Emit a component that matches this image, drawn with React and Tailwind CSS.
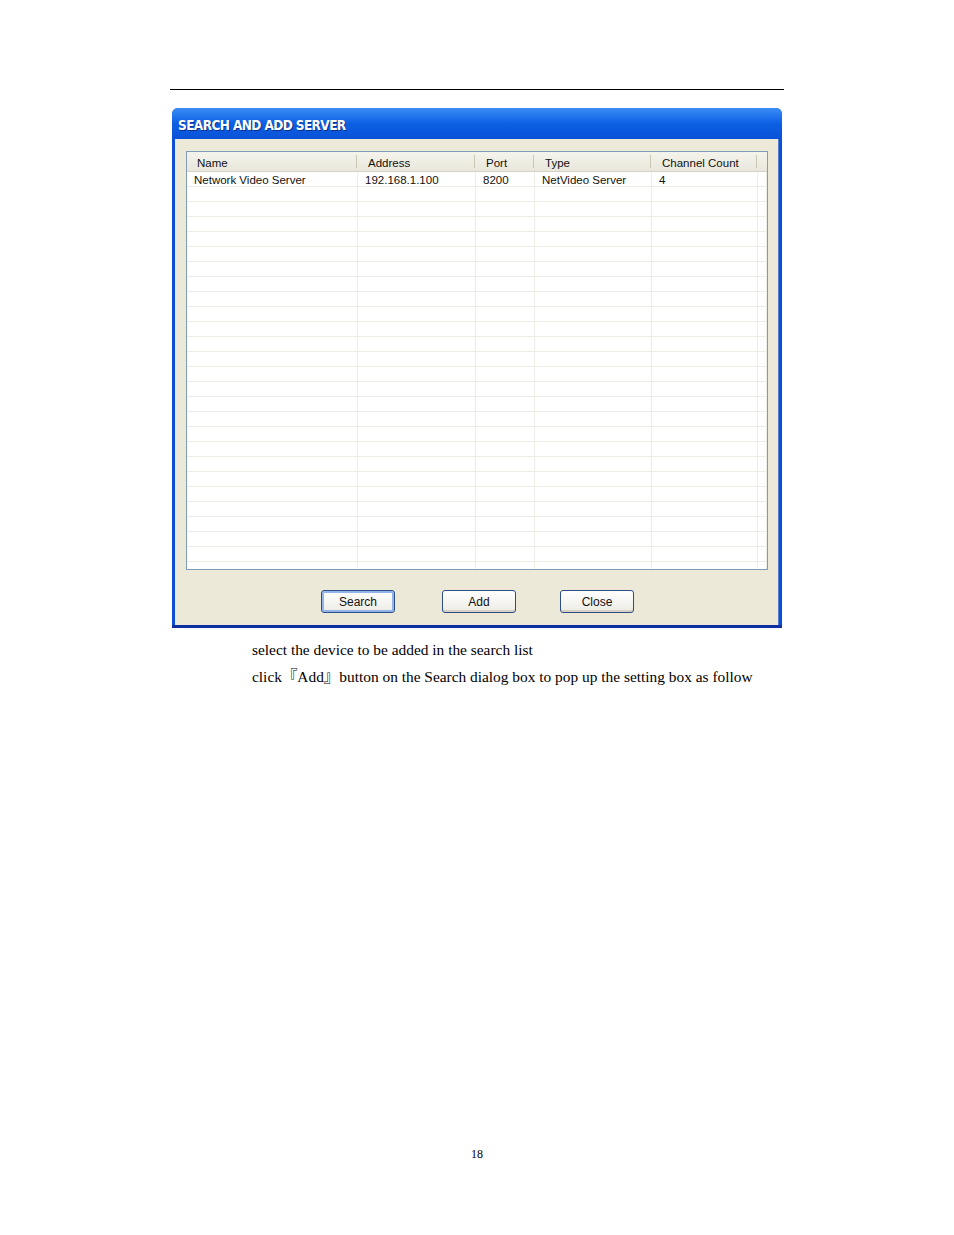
import React from 'react'

const COLS = [
  { label: 'Name', w: 'w-[171px]' },
  { label: 'Address', w: 'w-[118px]' },
  { label: 'Port', w: 'w-[59px]' },
  { label: 'Type', w: 'w-[117px]' },
  { label: 'Channel Count', w: 'w-[106px]' },
]

const ROWS = [['Network Video Server', '192.168.1.100', '8200', 'NetVideo Server', '4']]
const EMPTY_ROWS = 25

function Row({ cells, last }) {
  return (
    <div className={`flex h-[15px] ${last ? '' : 'border-b border-[#eeede5]'}`}>
      {COLS.map((c, i) => (
        <div
          key={i}
          className={`${c.w} shrink-0 border-r border-[#eeede5] pl-[7px] pt-[1px] leading-[14px] whitespace-nowrap overflow-hidden`}
        >
          {cells ? cells[i] : ''}
        </div>
      ))}
      <div className="flex-1 border-r border-[#eeede5]" />
    </div>
  )
}

function XpButton({ children, isDefault, className = '' }) {
  return (
    <button
      className={`w-[74px] h-[23px] rounded-[3px] border border-[#2b4f84] bg-gradient-to-b from-[#ffffff] to-[#ecebe4] text-[12px] text-[#111] leading-none ${
        isDefault ? 'shadow-[inset_0_0_0_2px_#93b4ea]' : 'shadow-[inset_0_-2px_0_#d6d0c5]'
      } ${className}`}
    >
      {children}
    </button>
  )
}

export default function App() {
  return (
    <div className="w-[954px] h-[1235px] bg-white relative font-['Liberation_Sans',Arial,sans-serif]">
      <div className="pt-[89px] pl-[170px]">
        <div className="w-[614px] border-t border-black" />

        <div className="ml-[2px] mt-[18px] w-[610px] h-[520px] flex flex-col bg-[#0a4fd6] rounded-t-[6px] overflow-hidden shadow-[inset_0_-3px_0_#0d2fa0]">
          {/* title bar */}
          <div className="h-[31px] shrink-0 flex items-center pt-[3px] px-[6px] bg-gradient-to-b from-[#3b8cf7] via-[#0d5fe3] to-[#0a52d8]">
            <span className="text-white font-bold text-[13.5px] tracking-[-0.6px] font-['DejaVu_Sans_Condensed','DejaVu_Sans',sans-serif] [text-shadow:1px_1px_0_#0b2f8c]">
              SEARCH AND ADD SERVER
            </span>
          </div>

          {/* body */}
          <div className="flex-1 mx-[3px] mb-[3px] bg-[#ece9d8] flex flex-col pt-[12px] pl-[11px] pr-[10px] border-r border-[#5a7fd0]">
            <div className="h-[419px] border border-[#7f9db9] bg-white flex flex-col text-[11.5px] text-[#111]">
              {/* header */}
              <div className="h-[20px] shrink-0 flex bg-gradient-to-b from-[#f5f4ec] to-[#e9e7dc] border-b border-[#d6d3c6]">
                {COLS.map((c, i) => (
                  <div key={i} className={`${c.w} shrink-0 flex items-center relative pl-[10px] pt-[4px] whitespace-nowrap`}>
                    {c.label}
                    <span className="absolute right-[1px] top-[3px] bottom-[3px] w-[1px] bg-[#c9c6b6]" />
                  </div>
                ))}
                <div className="flex-1" />
              </div>
              {ROWS.map((r, i) => (
                <Row key={i} cells={r} />
              ))}
              {Array.from({ length: EMPTY_ROWS }).map((_, i) => (
                <Row key={'e' + i} />
              ))}
              <div className="flex-1 flex">
                {COLS.map((c, i) => (
                  <div key={i} className={`${c.w} shrink-0 border-r border-[#eeede5]`} />
                ))}
                <div className="flex-1 border-r border-[#eeede5]" />
              </div>
            </div>

            <div className="mt-[20px] flex pl-[135px]">
              <XpButton isDefault>Search</XpButton>
              <XpButton className="ml-[47px]">Add</XpButton>
              <XpButton className="ml-[44px]">Close</XpButton>
            </div>
          </div>
        </div>

        <div className="pl-[82px] mt-[8px] font-['Liberation_Serif','Times_New_Roman',serif] text-[15.4px] text-black leading-[27px]">
          <p>select the device to be added in the search list</p>
          <p>
            click
            <span className="inline-block leading-[10px] font-['Noto_Sans_CJK_SC',serif]">『</span>
            Add
            <span className="inline-block leading-[10px] font-['Noto_Sans_CJK_SC',serif]">』</span>
            button on the Search dialog box to pop up the setting box as follow
          </p>
        </div>
      </div>

      <div className="absolute left-0 right-0 top-[1145px] text-center font-['Liberation_Serif','Times_New_Roman',serif] text-[12px] text-black">
        18
      </div>
    </div>
  )
}
